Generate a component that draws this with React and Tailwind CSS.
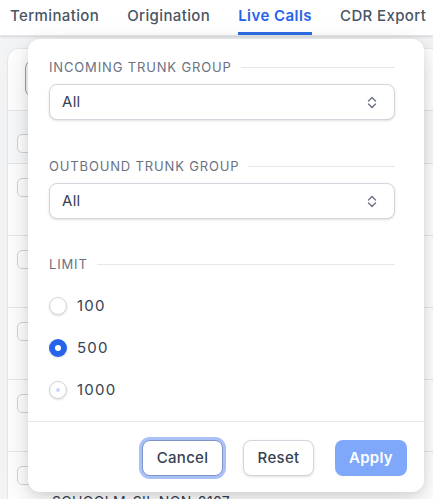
import React from "react";

function UpDown() {
  return (
    <svg width="10" height="13" viewBox="0 0 10 13" fill="none" stroke="#6b7280" strokeWidth="1.4" strokeLinecap="round" strokeLinejoin="round">
      <polyline points="1.5,5 5,1.5 8.5,5" />
      <polyline points="1.5,8 5,11.5 8.5,8" />
    </svg>
  );
}

function SectionLabel({ children }) {
  return (
    <div className="flex items-center gap-[9px] h-[16px]">
      <span className="text-[13px] leading-4 tracking-[0.065em] text-gray-500 font-normal whitespace-nowrap">{children}</span>
      <div className="flex-1 h-px bg-gray-200" />
    </div>
  );
}

function Select() {
  return (
    <div className="mt-[9px] h-[36px] rounded-lg border border-gray-300 shadow-sm bg-white flex items-center justify-between pl-[12px] pr-[17px]">
      <span className="text-[15px] text-gray-700 font-normal tracking-[0.02em]">All</span>
      <UpDown />
    </div>
  );
}

function Radio({ label, state }) {
  return (
    <div className="flex items-center h-[24px] gap-[10px]">
      {state === "checked" ? (
        <div className="w-[18px] h-[18px] rounded-full bg-[#2563eb] flex items-center justify-center shadow-sm">
          <div className="w-[6px] h-[6px] rounded-full bg-white" />
        </div>
      ) : (
        <div className="w-[18px] h-[18px] rounded-full border border-gray-300 bg-white shadow-sm flex items-center justify-center">
          {state === "hover" && <div className="w-[4px] h-[4px] rounded-full bg-[#c9d8fb]" />}
        </div>
      )}
      <span className="text-[15px] text-gray-700 font-normal tracking-[0.08em]">{label}</span>
    </div>
  );
}

function Row({ children }) {
  return (
    <div className="h-[72px] border-b border-gray-200 flex items-start pl-[9px] pt-[14px]">
      <div className="w-[19px] h-[19px] rounded-[5px] border border-gray-300 bg-white shrink-0" />
      {children}
    </div>
  );
}

export default function App() {
  return (
    <div className="relative w-[433px] h-[499px] overflow-hidden bg-gray-100 font-['Inter',sans-serif]">
      <header className="h-[36px] bg-white border-b border-gray-200 flex gap-[28px] pl-[10px] shadow-sm">
        <div className="pt-[6px] text-[15px] leading-5 text-gray-600 font-medium tracking-[0.025em]">Termination</div>
        <div className="pt-[6px] text-[15px] leading-5 text-gray-600 font-medium tracking-[0.025em]">Origination</div>
        <div className="relative pt-[6px] text-[15px] leading-5 text-[#2563eb] font-semibold tracking-[0.03em]">
          Live Calls
          <div className="absolute left-0 right-0 bottom-0 h-[3px] bg-[#2f6be4]" />
        </div>
        <div className="pt-[6px] text-[15px] leading-5 text-gray-600 font-medium tracking-[0.025em] whitespace-nowrap">CDR Export</div>
      </header>

      <div className="pl-[7px] pt-[12px]">
        <div className="bg-white rounded-xl border border-gray-200 w-[440px]">
          <div className="h-[61px] pl-[17px] pt-[11px]">
            <div className="w-[120px] h-[37px] rounded-lg border border-gray-400 bg-gray-50" />
          </div>
          <div className="h-[54px] bg-gray-50 border-y border-gray-200 flex items-start pl-[9px] pt-[23px]">
            <div className="w-[19px] h-[19px] rounded-[5px] border border-gray-300 bg-white" />
          </div>
          <Row />
          <Row />
          <Row />
          <Row />
          <Row>
            <div className="ml-[16px] mt-[26px] text-[14px] leading-5 text-gray-700 tracking-wide whitespace-nowrap">SCHOOLM_SIL NON_0107</div>
          </Row>
        </div>
      </div>

      <div className="absolute left-[28px] top-[39px] w-[396px] h-[453px] bg-white rounded-xl shadow-[0_10px_30px_rgba(0,0,0,0.15),0_2px_8px_rgba(0,0,0,0.08)] flex flex-col">
        <div className="pt-[20px] pl-[21px] pr-[29px] pb-[19px]">
          <SectionLabel>INCOMING TRUNK GROUP</SectionLabel>
          <Select />
          <div className="mt-[38px]">
            <SectionLabel>OUTBOUND TRUNK GROUP</SectionLabel>
            <Select />
          </div>
          <div className="mt-[37px]">
            <SectionLabel>LIMIT</SectionLabel>
            <div className="mt-[22px] flex flex-col gap-[18px]">
              <Radio label="100" state="unchecked" />
              <Radio label="500" state="checked" />
              <Radio label="1000" state="hover" />
            </div>
          </div>
        </div>
        <div className="border-t border-gray-200 pt-[18px] pr-[17px] flex justify-end gap-[20px]">
          <button className="w-[81px] h-[36px] rounded-lg border border-[#7f95c9] bg-white ring-[3px] ring-[#a9c1f7] text-[15px] font-medium tracking-[0.02em] text-gray-700">Cancel</button>
          <button className="w-[71px] h-[36px] rounded-lg border border-gray-300 bg-white shadow-sm text-[15px] font-medium tracking-[0.02em] text-gray-700">Reset</button>
          <button className="ml-[1px] w-[72px] h-[36px] rounded-lg bg-[#7fa8fb] text-[15px] font-semibold tracking-[0.02em] text-white">Apply</button>
        </div>
      </div>
    </div>
  );
}
